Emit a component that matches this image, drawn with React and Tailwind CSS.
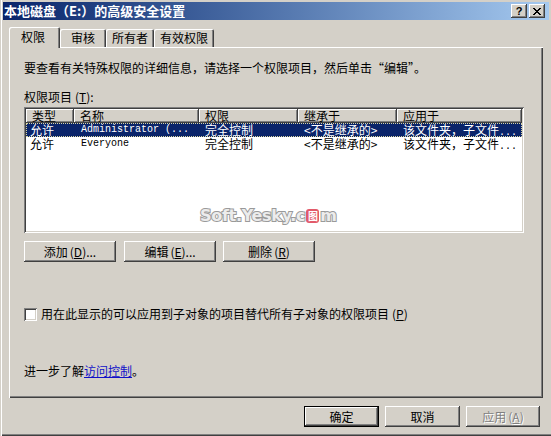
import React from "react";

// Classic Windows 3D edges, drawn with inset shadows
const RAISED =
  "shadow-[inset_-1px_-1px_#404040,inset_1px_1px_#ffffff,inset_-2px_-2px_#808080,inset_2px_2px_#d4d0c8]";
const SUNKEN =
  "shadow-[inset_1px_1px_#808080,inset_-1px_-1px_#ffffff,inset_2px_2px_#404040,inset_-2px_-2px_#d4d0c8]";
const HEADER =
  "shadow-[inset_-1px_-1px_#404040,inset_1px_1px_#ffffff,inset_-2px_-2px_#808080]";

const CJK = "font-['Noto_Sans_CJK_SC','Liberation_Sans',sans-serif]";
const MONO = "font-['Liberation_Mono','Noto_Sans_CJK_SC',monospace]";

const Key = ({ c }) => <span className="underline underline-offset-[1px]">{c}</span>;

const COLUMNS = [
  { label: "类型", w: "w-[48px]" },
  { label: "名称", w: "w-[125px]" },
  { label: "权限", w: "w-[99px]" },
  { label: "继承于", w: "w-[99px]" },
  { label: "应用于", w: "w-[125px]" },
];

const ENTRIES = [
  { type: "允许", name: "Administrator (...", perm: "完全控制", from: "<不是继承的>", selected: true },
  { type: "允许", name: "Everyone", perm: "完全控制", from: "<不是继承的>", selected: false },
];

const TABS = [
  { label: "权限", w: "w-[51px]", active: true },
  { label: "审核", w: "w-[46px]" },
  { label: "所有者", w: "w-[48px]" },
  { label: "有效权限", w: "w-[60px]" },
];

const Button = ({ children, className = "", isDefault, disabled }) => (
  <div
    className={`flex items-center justify-center bg-[#d4d0c8] ${
      isDefault ? "border border-black" : ""
    } ${className}`}
  >
    <div
      className={`flex h-full w-full items-center justify-center text-[12px] leading-[14px] ${RAISED} ${
        disabled ? "text-[#808080] [text-shadow:1px_1px_#ffffff]" : "text-black"
      }`}
    >
      {children}
    </div>
  </div>
);

const TitleButton = ({ children }) => (
  <div className={`flex h-[14px] w-[16px] items-center justify-center bg-[#d4d0c8] ${RAISED}`}>
    {children}
  </div>
);

const PermissionList = () => (
  <div className={`relative mt-[3px] h-[126px] w-[500px] bg-white p-[2px] ${SUNKEN}`}>
    <div className="flex h-[14px]">
      {COLUMNS.map((c) => (
        <div
          key={c.label}
          className={`${c.w} h-[14px] shrink-0 bg-[#d4d0c8] pl-[6px] text-[12px] leading-[14px] ${HEADER}`}
        >
          {c.label}
        </div>
      ))}
    </div>
    {ENTRIES.map((e) => (
      <div
        key={e.name}
        className={`flex h-[14px] whitespace-nowrap text-[12px] leading-[14px] ${
          e.selected
            ? "bg-[#0a246a] text-white outline-1 -outline-offset-1 outline-dotted outline-[#d8d4a0]"
            : "text-black"
        }`}
      >
        <div className="w-[48px] shrink-0 pl-[4px]">{e.type}</div>
        <div className={`w-[125px] shrink-0 pl-[7px] text-[10px] ${MONO}`}>{e.name}</div>
        <div className="w-[99px] shrink-0 pl-[6px]">{e.perm}</div>
        <div className="w-[99px] shrink-0 pl-[6px]">{e.from}</div>
        <div className="w-[125px] shrink-0 pl-[6px]">
          该文件夹，子文件<span className={`text-[10px] ${MONO}`}>...</span>
        </div>
      </div>
    ))}

    {/* site watermark stamped over the list */}
    <div className="absolute left-[176px] top-[100px] flex items-center font-['DejaVu_Sans',sans-serif] text-[16px] font-bold leading-[18px] tracking-[-0.3px] text-[#ececec] [-webkit-text-stroke:2px_#9a9a9a] [paint-order:stroke_fill]">
      Soft.Yesky.c
      <span className={`mx-[1px] flex h-[14px] w-[13px] items-center justify-center rounded-[3px] bg-[#e25a6a] text-[10px] leading-[10px] text-white [-webkit-text-stroke:0] ${CJK}`}>
        图
      </span>
      m
    </div>
  </div>
);

export default function App() {
  return (
    <div
      className={`${CJK} flex h-[436px] w-[551px] flex-col overflow-hidden bg-[#d4d0c8] pl-[3px] pr-[2px] pt-[2px] text-black shadow-[inset_1px_0_#d4d0c8,inset_2px_0_#ffffff,inset_0_-1px_#404040,inset_0_-2px_#808080]`}
    >
      {/* caption bar */}
      <div className="flex h-[18px] shrink-0 items-center justify-between bg-linear-to-r from-[#0a246a] to-[#a6caf0] pl-[1px] pr-[4px]">
        <span className="text-[13px] font-bold leading-[16px] text-white">本地磁盘（E:）的高级安全设置</span>
        <div className="flex gap-[2px]">
          <TitleButton>
            <span className="font-['Liberation_Sans',sans-serif] text-[11px] font-bold leading-[11px]">?</span>
          </TitleButton>
          <TitleButton>
            <svg width="8" height="7" viewBox="0 0 8 7" shapeRendering="crispEdges">
              <path d="M0 0h2v1h-2zM6 0h2v1h-2zM1 1h2v1h-2zM5 1h2v1h-2zM2 2h4v1h-4zM3 3h2v1h-2zM2 4h4v1h-4zM1 5h2v1h-2zM5 5h2v1h-2zM0 6h2v1h-2zM6 6h2v1h-2z" fill="#000" />
            </svg>
          </TitleButton>
        </div>
      </div>

      {/* tab strip */}
      <div className="ml-[6px] mt-[7px] flex h-[20px] shrink-0 items-end">
        {TABS.map((t) => (
          <div
            key={t.label}
            className={`${t.w} relative flex shrink-0 justify-center rounded-t-[2px] bg-[#d4d0c8] text-[12px] leading-[14px] ${
              t.active
                ? "z-10 h-[21px] -mb-[1px] pt-[3px] pr-[3px] shadow-[inset_1px_1px_#ffffff,inset_-1px_0_#404040,inset_-2px_0_#808080]"
                : "h-[18px] pt-[2px] shadow-[inset_1px_1px_#ffffff,inset_-1px_0_#404040,inset_-2px_0_#808080]"
            }`}
          >
            {t.label}
          </div>
        ))}
      </div>

      {/* tab page */}
      <div className="ml-[6px] flex h-[351px] w-[534px] shrink-0 flex-col pl-[15px] pt-[14px] shadow-[inset_1px_1px_#ffffff,inset_-1px_-1px_#404040,inset_-2px_-2px_#808080]">
        <p className="text-[12px] leading-[14px]">
          要查看有关特殊权限的详细信息，请选择一个权限项目，然后单击“编辑”。
        </p>
        <p className="mt-[15px] text-[12px] leading-[14px]">
          权限项目<span className="ml-[3px]">(<Key c="T" />):</span>
        </p>

        <PermissionList />

        <div className="mt-[8px] flex">
          <Button className="h-[21px] w-[92px]">
            添加<span className="ml-[2px]">(<Key c="D" />)...</span>
          </Button>
          <Button className="ml-[8px] h-[21px] w-[92px]">
            编辑<span className="ml-[2px]">(<Key c="E" />)...</span>
          </Button>
          <Button className="ml-[7px] h-[21px] w-[92px]">
            删除<span className="ml-[2px]">(<Key c="R" />)</span>
          </Button>
        </div>

        <label className="mt-[44px] flex h-[16px] items-center">
          <span className={`h-[13px] w-[13px] shrink-0 bg-white ${SUNKEN}`} />
          <span className="ml-[4px] text-[12px] leading-[14px]">
            用在此显示的可以应用到子对象的项目替代所有子对象的权限项目
            <span className="ml-[3px]">(<Key c="P" />)</span>
          </span>
        </label>

        <p className="mt-[42px] text-[12px] leading-[14px]">
          进一步了解<span className="text-[#1010c8] underline underline-offset-[1px]">访问控制</span>。
        </p>
      </div>

      {/* dialog buttons */}
      <div className="ml-[6px] mt-[8px] flex w-[534px] justify-end gap-[6px] pr-[3px]">
        <Button isDefault className="h-[21px] w-[75px]">确定</Button>
        <Button className="h-[21px] w-[75px]">取消</Button>
        <Button disabled className="h-[21px] w-[74px]">
          应用<span className="ml-[2px]">(<Key c="A" />)</span>
        </Button>
      </div>
    </div>
  );
}
